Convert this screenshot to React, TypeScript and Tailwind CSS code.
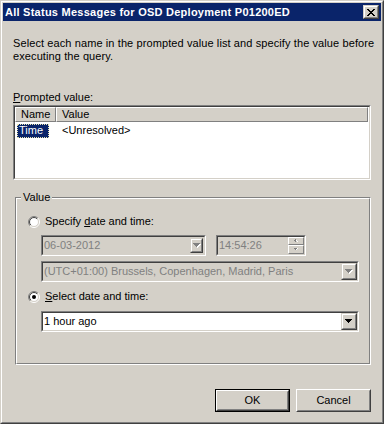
import React from "react";

const sunkenOuter = "border border-t-[#808080] border-l-[#808080] border-r-white border-b-white";
const sunkenInner = "border border-t-[#404040] border-l-[#404040] border-r-[#d4d0c8] border-b-[#d4d0c8]";
const raisedOuter = "border border-t-[#d4d0c8] border-l-[#d4d0c8] border-r-[#404040] border-b-[#404040]";
const raisedInner = "border border-t-white border-l-white border-r-[#808080] border-b-[#808080]";

function Arrow({ disabled }: { disabled?: boolean }) {
    return (
        <svg width="8" height="5" viewBox="0 0 8 5" shapeRendering="crispEdges">
            {disabled && <path d="M1 1h7v1H1zM2 2h5v1H2zM3 3h3v1H3zM4 4h1v1H4z" fill="#fff" />}
            <path d="M0 0h7v1H0zM1 1h5v1H1zM2 2h3v1H2zM3 3h1v1H3z" fill={disabled ? "#808080" : "#000"} />
        </svg>
    );
}

function SmallArrow({ up }: { up?: boolean }) {
    return (
        <svg width="6" height="4" viewBox="0 0 6 4" shapeRendering="crispEdges">
            <path
                d={up ? "M2 0h1v1H2zM1 1h3v1H1zM2 2h1v1H2z" : "M1 0h3v1H1zM2 1h1v1H2z"}
                fill="#808080"
            />
            <path d={up ? "M3 1h1v1H3zM4 2h1v1H4z" : "M3 1h1v1H3zM4 0h1v1H4z"} fill="#fff" />
        </svg>
    );
}

function DropButton({ disabled, width = "w-[16px]" }: { disabled?: boolean; width?: string }) {
    return (
        <div className={`${width} h-full ${raisedOuter}`}>
            <div className={`h-full ${raisedInner} bg-[#d4d0c8] flex items-center justify-center`}>
                <Arrow disabled={disabled} />
            </div>
        </div>
    );
}

function Radio({ id, checked }: { id: string; checked?: boolean }) {
    return (
        <svg width="12" height="12" viewBox="0 0 12 12">
            <defs>
                <linearGradient id={`o${id}`} x1="0" y1="0" x2="1" y2="1">
                    <stop offset="0.5" stopColor="#808080" />
                    <stop offset="0.5" stopColor="#ffffff" />
                </linearGradient>
                <linearGradient id={`i${id}`} x1="0" y1="0" x2="1" y2="1">
                    <stop offset="0.5" stopColor="#404040" />
                    <stop offset="0.5" stopColor="#d4d0c8" />
                </linearGradient>
            </defs>
            <circle cx="6" cy="6" r="5.5" fill="none" stroke={`url(#o${id})`} />
            <circle cx="6" cy="6" r="4.5" fill="#fff" stroke={`url(#i${id})`} />
            {checked && <circle cx="6" cy="6" r="2" fill="#000" />}
        </svg>
    );
}

function PushButton({ label, isDefault }: { label: string; isDefault?: boolean }) {
    if (isDefault) {
        return (
            <div className="w-[75px] h-[23px] border border-black">
                <div className="h-full border border-t-white border-l-white border-r-[#404040] border-b-[#404040]">
                    <div className="h-full border border-t-[#d4d0c8] border-l-[#d4d0c8] border-r-[#808080] border-b-[#808080] flex items-center justify-center">
                        {label}
                    </div>
                </div>
            </div>
        );
    }
    return (
        <div className="w-[75px] h-[23px] border border-t-white border-l-white border-r-[#404040] border-b-[#404040]">
            <div className="h-full border border-t-[#d4d0c8] border-l-[#d4d0c8] border-r-[#808080] border-b-[#808080] flex items-center justify-center">
                {label}
            </div>
        </div>
    );
}

export default function App() {
    return (
        <div className="w-[384px] h-[424px] bg-[#d4d0c8] text-[11px] leading-[13px] text-black font-['Liberation_Sans',Arial,sans-serif]">
            <div className="h-full border border-t-[#d4d0c8] border-l-[#d4d0c8] border-r-[#404040] border-b-[#404040]">
                <div className="h-full border border-t-white border-l-white border-r-[#808080] border-b-[#808080] p-px flex flex-col">
                    {/* Title bar */}
                    <div className="h-[18px] bg-[#0a246a] flex items-center justify-between px-[2px]">
                        <span className="text-white font-bold tracking-[0.25px] whitespace-nowrap">
                            All Status Messages for OSD Deployment P01200ED
                        </span>
                        <div className={`w-[16px] h-[14px] ${raisedOuter}`}>
                            <div className={`h-full ${raisedInner} bg-[#d4d0c8] flex items-center justify-center`}>
                                <svg width="8" height="7" viewBox="0 0 8 7" shapeRendering="crispEdges">
                                    <path
                                        d="M0 0h2v1H0zM6 0h2v1H6zM1 1h2v1H1zM5 1h2v1H5zM2 2h4v1H2zM3 3h2v1H3zM2 4h4v1H2zM1 5h2v1H1zM5 5h2v1H5zM0 6h2v1H0zM6 6h2v1H6z"
                                        fill="#000"
                                    />
                                </svg>
                            </div>
                        </div>
                    </div>

                    {/* Body */}
                    <div className="px-[10px] flex flex-col">
                        <p className="mt-[16px] whitespace-nowrap tracking-[0.1px]">
                            Select each name in the prompted value list and specify the value before
                            <br />
                            executing the query.
                        </p>

                        <div className="mt-[28px]">
                            <u>P</u>rompted value:
                        </div>

                        {/* List view */}
                        <div className={`mt-px h-[75px] ${sunkenOuter}`}>
                            <div className={`h-full ${sunkenInner} bg-white`}>
                                <div className="flex h-[15px]">
                                    <div className={`w-[41px] ${raisedInner} bg-[#d4d0c8] pl-[5px] flex items-center`}>Name</div>
                                    <div className={`w-[312px] ${raisedInner} bg-[#d4d0c8] pl-[5px] flex items-center`}>Value</div>
                                </div>
                                <div className="flex items-center h-[15px] mt-px">
                                    <span className="ml-[2px] w-[32px] h-[14px] bg-[#0a246a] text-white border border-dotted border-[#e8e4b0] pl-px flex items-center">
                                        Time
                                    </span>
                                    <span className="ml-[13px]">&lt;Unresolved&gt;</span>
                                </div>
                            </div>
                        </div>

                        {/* Value group */}
                        <div className="mt-[17px] ml-[2px] w-[356px] h-[168px] border border-t-[#808080] border-l-[#808080] border-r-white border-b-white">
                            <div className="h-full border border-t-white border-l-white border-r-[#808080] border-b-[#808080] flex flex-col">
                                <div className="-mt-[8px] ml-[4px] px-[2px] w-fit bg-[#d4d0c8]">Value</div>

                                <div className="mt-[11px] ml-[11px] flex items-center gap-[5px] h-[13px]">
                                    <Radio id="r1" />
                                    <span>Specify <u>d</u>ate and time:</span>
                                </div>

                                <div className="mt-[7px] ml-[24px] flex gap-[10px]">
                                    <div className={`w-[165px] h-[21px] ${sunkenOuter}`}>
                                        <div className={`h-full ${sunkenInner} bg-[#d4d0c8] flex items-center justify-between pr-px`}>
                                            <span className="pl-px text-[#808080]">06-03-2012</span>
                                            <div className="h-[15px] flex">
                                                <DropButton disabled width="w-[13px]" />
                                            </div>
                                        </div>
                                    </div>
                                    <div className={`w-[90px] h-[21px] ${sunkenOuter}`}>
                                        <div className={`h-full ${sunkenInner} bg-[#d4d0c8] flex items-center justify-between`}>
                                            <span className="pl-px text-[#808080]">14:54:26</span>
                                            <div className="w-[16px] h-full flex flex-col">
                                                <div className={`h-[8px] ${raisedInner} flex items-center justify-center`}>
                                                    <SmallArrow up />
                                                </div>
                                                <div className={`h-[9px] ${raisedInner} flex items-center justify-center`}>
                                                    <SmallArrow />
                                                </div>
                                            </div>
                                        </div>
                                    </div>
                                </div>

                                <div className={`mt-[5px] ml-[24px] w-[318px] h-[21px] ${sunkenOuter}`}>
                                    <div className={`h-full ${sunkenInner} bg-[#d4d0c8] flex items-center justify-between`}>
                                        <span className="pl-px text-[#808080] whitespace-nowrap">
                                            (UTC+01:00) Brussels, Copenhagen, Madrid, Paris
                                        </span>
                                        <DropButton disabled />
                                    </div>
                                </div>

                                <div className="mt-[8px] ml-[11px] flex items-center gap-[5px] h-[13px]">
                                    <Radio id="r2" checked />
                                    <span><u>S</u>elect date and time:</span>
                                </div>

                                <div className={`mt-[8px] ml-[24px] w-[318px] h-[21px] ${sunkenOuter}`}>
                                    <div className={`h-full ${sunkenInner} bg-white flex items-center justify-between`}>
                                        <span className="pl-px">1 hour ago</span>
                                        <DropButton />
                                    </div>
                                </div>
                            </div>
                        </div>

                        {/* Buttons */}
                        <div className="mt-[24px] flex justify-end gap-[6px]">
                            <PushButton label="OK" isDefault />
                            <PushButton label="Cancel" />
                        </div>
                    </div>
                </div>
            </div>
        </div>
    );
}
